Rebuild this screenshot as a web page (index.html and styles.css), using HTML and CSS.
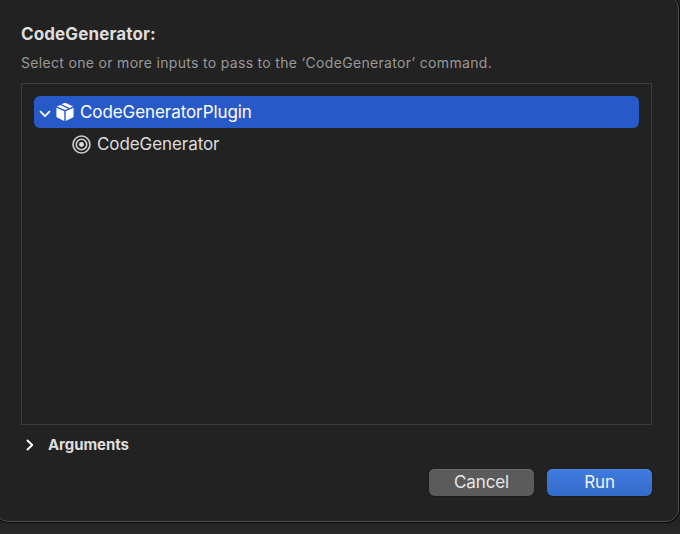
FILE: index.html
```html
<!DOCTYPE html>
<html lang="en">
<head>
<meta charset="utf-8">
<title>CodeGenerator</title>
<link rel="stylesheet" href="styles.css">
</head>
<body>
<main class="dialog">
  <h1 class="title"><span>CodeGenerator:</span></h1>
  <p class="subtitle"><span>Select one or more inputs to pass to the ‘CodeGenerator’ command.</span></p>
  <div class="list">
    <div class="row selected">
      <svg class="chevron-down" viewBox="0 0 12 8"><path d="M1.6 1.7 6 6.2l4.4-4.5"/></svg>
      <svg class="package" viewBox="0 0 18 20">
        <path d="M.4 5.7 8.3 9.2v9.7L1.2 15.6Q.4 15.200.4 14.300zM17.600 5.700 9.700 9.200v9.700l7.100-3.300q.8-.4.8-1.300z"/>
        <path d="M.9 4.500 4.200 2.900 12.200 6.700 9 8.100zM5.500 2.300 8.100 1.100Q9 .7 9.900 1.100L17.100 4.500 13.600 6.100z"/>
      </svg>
      <span class="label plugin">CodeGeneratorPlugin</span>
    </div>
    <div class="row child">
      <svg class="target" viewBox="0 0 20 20"><circle cx="10" cy="10" r="8.900"/><circle cx="10" cy="10" r="5.500"/><circle class="dot" cx="10" cy="10" r="2.600"/></svg>
      <span class="label generator">CodeGenerator</span>
    </div>
  </div>
  <div class="arguments">
    <svg class="chevron-right" viewBox="0 0 8 12"><path d="m1.500 1.500 4.700 4.500-4.700 4.500"/></svg>
    <span>Arguments</span>
  </div>
  <div class="actions">
    <button class="button cancel"><span>Cancel</span></button>
    <button class="button run"><span>Run</span></button>
  </div>
</main>
</body>
</html>
```
FILE: styles.css
```css
* { box-sizing: border-box; }
html { height: 100%; overflow: hidden; background: #282627; }
body {
  margin: 0;
  height: 534px;
  overflow: hidden;
  background: linear-gradient(#242424 520px, #252424 524px, #2b292a 534px);
  font-family: Inter, "Liberation Sans", sans-serif;
  color: #dededd;
}
.dialog {
  width: 684px;
  height: 527px;
  margin: -5px 0 0 -5px;
  padding: 27px 26px 0 25px;
  background: #222;
  border: 1px solid #505050;
  border-radius: 13px;
  box-shadow: 0 0 0 1px #090909;
}
.title { margin: 0; height: 22px; line-height: 22px; font-size: 17px; font-weight: 700; letter-spacing: 0.13px; }
.subtitle { margin: 9px 0 0; height: 18px; line-height: 18px; font-size: 14px; letter-spacing: 0.32px; color: #999; white-space: nowrap; }
.list { width: 631px; height: 342px; margin-top: 11px; padding: 12px; border: 1px solid #3c3c3c; }
.row { display: flex; align-items: center; height: 32px; font-size: 17px; line-height: 32px; }
.selected { width: 605px; padding-left: 5px; border-radius: 6px; background: #2859c8; color: #fff; }
.chevron-down { width: 12px; height: 8px; margin-top: 3px; }
.chevron-down path, .chevron-right path { fill: none; stroke: #fff; stroke-width: 1.9; stroke-linecap: round; stroke-linejoin: round; }
.package { width: 18px; height: 20px; margin-left: 4.5px; fill: #fff; }
.plugin { margin-left: 6.5px; letter-spacing: -0.08px; }
.child { padding-left: 38px; }
.target { width: 19px; height: 19px; fill: none; stroke: #cfcfcf; stroke-width: 1.7; }
.target .dot { fill: #dedede; stroke: none; }
.generator { margin-left: 6px; letter-spacing: -0.08px; }
.arguments { display: flex; align-items: center; height: 20px; margin-top: 10px; padding-left: 5px; font-size: 15px; font-weight: 700; line-height: 20px; letter-spacing: -0.08px; }
.chevron-right { width: 8px; height: 12px; margin: -1px 14px 0 0; }
.actions { display: flex; justify-content: flex-end; gap: 13px; margin-top: 14px; }
.button { width: 105px; height: 27px; padding: 0 0 1px; border: 0; border-radius: 6px; font: 17px/25px Inter, "Liberation Sans", sans-serif; letter-spacing: -0.1px; color: #e8e8e8; }
.cancel { background: #5b5b5b; box-shadow: inset 0 1px #6a6a6a, 0 1px 1px #1b1b1b; }
.run { background: linear-gradient(#407be0, #346bca); box-shadow: inset 0 1px #4b83e2, 0 1px 1px #1b1b1b; color: #f0f3fa; }
```
